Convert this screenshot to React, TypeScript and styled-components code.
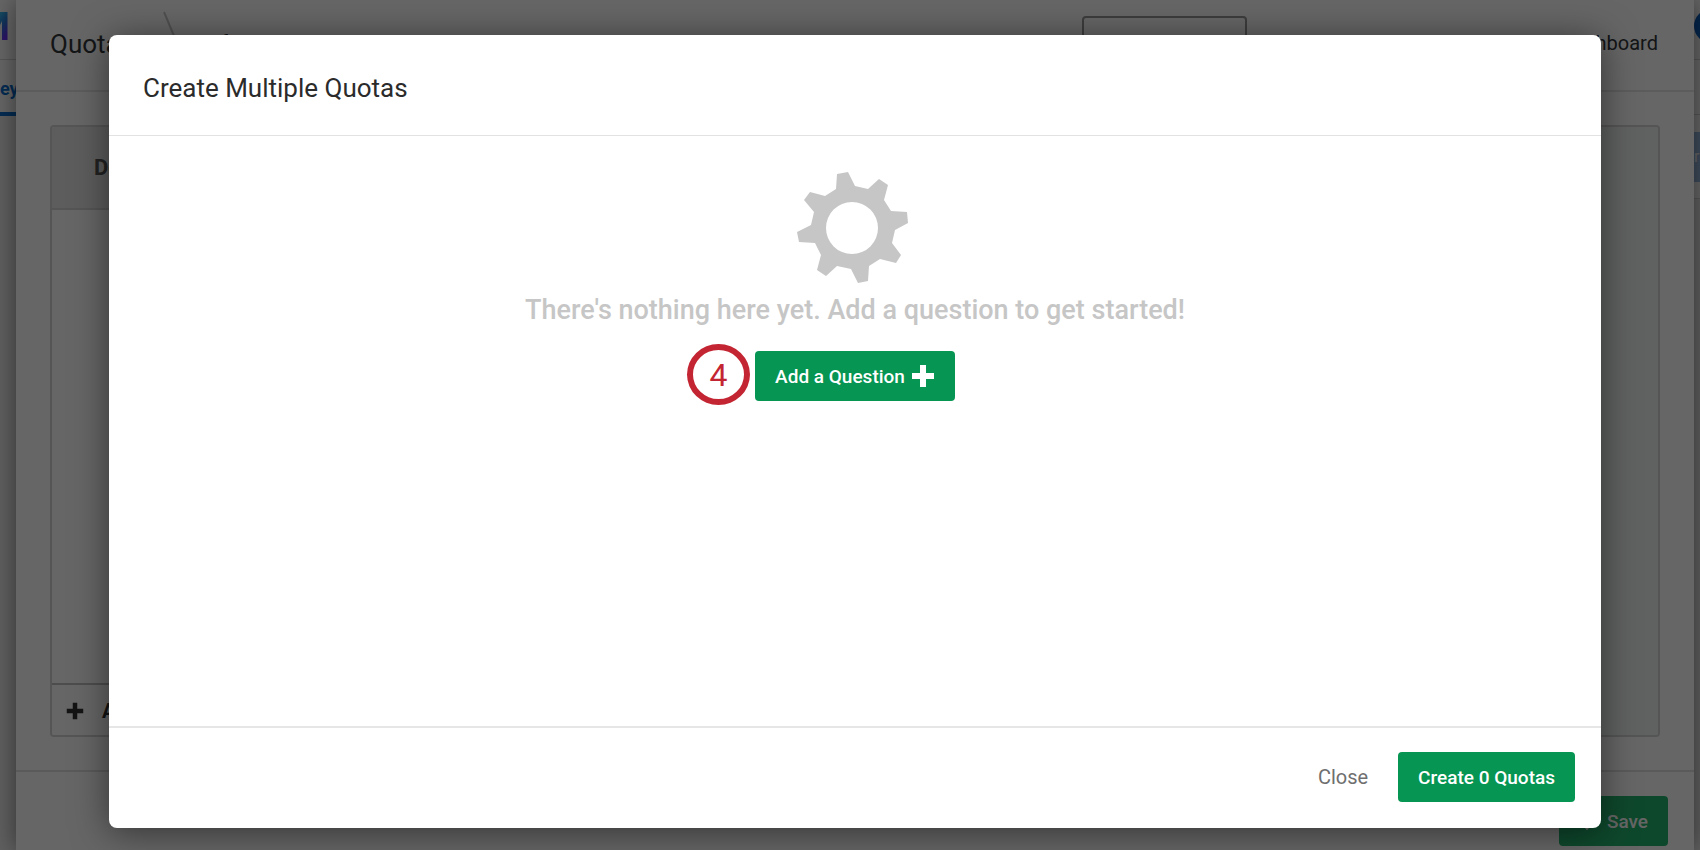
import React from "react";
import styled, { createGlobalStyle } from "styled-components";

const Global = createGlobalStyle`
  * { box-sizing: border-box; }
  html, body { margin: 0; height: 100%; }
  #root { height: 100%; }
  body { background: #fff; color: #32363a; font-family: Roboto, "Liberation Sans", sans-serif; overflow: hidden; }
  button { font: inherit; cursor: pointer; }
  h1, h2, p { margin: 0; font-weight: 400; }
`;

const Screen = styled.div`
  position: relative;
  display: grid;
  grid-template-columns: 16px minmax(0, 1fr) 6px;
  height: 100vh;
  overflow: hidden;
`;

const Edge = styled.aside`
  display: flex;
  flex-direction: column;
  overflow: hidden;
  background: #f0f0f0;
`;

const EdgeBar = styled.div`
  display: flex;
  flex: none;
  align-items: center;
  height: 60px;
  padding-bottom: 8px;
  background: #fff;
  border-bottom: 1px solid #d8d8d8;

  svg {
    display: block;
    flex: none;
  }
`;

const EdgeTab = styled.a`
  display: flex;
  flex: none;
  align-items: center;
  height: 56px;
  padding-top: 4px;
  background: #fff;
  border-bottom: 4px solid #0b6ed0;
  color: #0b6ed0;
  font-size: 18px;
  font-weight: 700;
  text-decoration: none;
`;

const EdgeRow = styled.div<{ $height: number }>`
  display: flex;
  flex: none;
  align-items: center;
  height: ${(p) => p.$height}px;
  background: #fff;
  border-bottom: 1px solid #d8d8d8;
`;

const EdgeBlock = styled.div`
  flex: 1;
  height: 50px;
  background: #9cbde6;
  color: #fff;
  font-size: 16px;
  line-height: 50px;
`;

const Panel = styled.main`
  z-index: 1;
  display: flex;
  flex-direction: column;
  min-width: 0;
  background: #fff;
  box-shadow: 0 0 24px rgba(0, 0, 0, 0.5);
`;

const PanelHeader = styled.header`
  display: flex;
  align-items: center;
  gap: 44px;
  flex: none;
  height: 92px;
  padding: 0 36px 4px 34px;
  border-bottom: 2px solid #e6e6e6;
  font-size: 20px;
  white-space: nowrap;
`;

const Crumbs = styled.div`
  display: flex;
  flex: 1;
  align-items: center;
  gap: 30px;
  font-size: 22px;
`;

const PanelTitle = styled.h1`
  padding-top: 2px;
  font-size: 26px;
`;

const CrumbGroup = styled.div`
  display: flex;
  align-items: center;
  gap: 8px;
`;

const OutlineButton = styled.button`
  height: 54px;
  padding: 0 25px;
  background: #fff;
  border: 2px solid #999;
  border-radius: 4px;
  color: inherit;
`;

const PlainButton = styled.button`
  padding: 0;
  background: none;
  border: 0;
  color: inherit;
`;

const PanelBody = styled.div`
  display: flex;
  flex: 1;
  min-height: 0;
  padding: 33px 34px;
`;

const QuotaBox = styled.section`
  display: flex;
  flex: 1;
  border: 2px solid #d4d4d4;
  border-radius: 4px;
  overflow: hidden;
`;

const GroupList = styled.div`
  display: flex;
  flex-direction: column;
  width: 400px;
`;

const GroupHead = styled.h2`
  height: 83px;
  padding-left: 42px;
  background: #e9e9e9;
  border-bottom: 2px solid #d4d4d4;
  color: #555;
  font-size: 22px;
  font-weight: 700;
  line-height: 82px;
`;

const AddGroup = styled.button`
  display: flex;
  align-items: center;
  gap: 18px;
  height: 52px;
  margin-top: auto;
  padding: 2px 14px 0;
  background: #fff;
  border: 0;
  border-top: 2px solid #c0c0c0;
  color: #333;
  font-size: 20px;
  font-weight: 700;
`;

const QuotaArea = styled.div`
  flex: 1;
  background: #f0f5f3;
`;

const PanelFooter = styled.footer`
  display: flex;
  align-items: center;
  justify-content: flex-end;
  flex: none;
  height: 80px;
  padding: 20px 26px 0;
  border-top: 2px solid #e0e0e0;
`;

const Backdrop = styled.div`
  position: absolute;
  inset: 0;
  z-index: 2;
  display: flex;
  padding: 35px 99px 22px 109px;
  background: rgba(0, 0, 0, 0.6);
`;

const Dialog = styled.div`
  display: flex;
  flex: 1;
  flex-direction: column;
  background: #fff;
  border-radius: 8px;
  box-shadow: 0 4px 36px rgba(0, 0, 0, 0.5);
`;

const DialogHeader = styled.header`
  display: flex;
  align-items: center;
  height: 101px;
  padding: 6px 34px 0;
  border-bottom: 1px solid #e2e2e2;
`;

const DialogTitle = styled.h2`
  color: #2b2b2b;
  font-size: 26px;
`;

const DialogBody = styled.div`
  display: flex;
  flex: 1;
  flex-direction: column;
  align-items: center;
  padding-top: 36px;
`;

const EmptyText = styled.p`
  margin-top: 10px;
  color: #c6c6c6;
  font-size: 27px;
  font-weight: 500;
  line-height: 32px;
`;

const ActionRow = styled.div`
  position: relative;
  margin-top: 25px;
`;

const StepBadge = styled.span`
  position: absolute;
  top: -7px;
  right: calc(100% + 5px);
  display: flex;
  align-items: center;
  justify-content: center;
  width: 63px;
  height: 61px;
  border: 6px solid #c42532;
  border-radius: 50%;
  color: #c42532;
  font-size: 32px;
`;

const PrimaryButton = styled.button<{ $faded?: boolean }>`
  display: flex;
  align-items: center;
  justify-content: center;
  gap: 6px;
  height: 50px;
  padding: 0 20px;
  background: ${(p) => (p.$faded ? "#24b46e" : "#069552")};
  border: 0;
  border-radius: 4px;
  color: #fff;
  font-size: 19px;
  font-weight: 500;
`;

const DialogFooter = styled.footer`
  display: flex;
  align-items: center;
  justify-content: flex-end;
  gap: 30px;
  height: 102px;
  padding: 0 26px 2px;
  border-top: 2px solid #e6e6e6;
  font-size: 20px;
`;

const CloseButton = styled(PlainButton)`
  color: #6f6f6f;
`;

const LogoMark = () => (
  <svg width="8" height="28" viewBox="0 0 8 28" aria-hidden="true">
    <defs>
      <linearGradient id="mark" x1="0" y1="0" x2="0.3" y2="1">
        <stop offset="0" stopColor="#36c0f0" />
        <stop offset="0.5" stopColor="#2a7fe0" />
        <stop offset="1" stopColor="#6a35ff" />
      </linearGradient>
    </defs>
    <path fill="url(#mark)" d="M0 0h7.5v28H2V9L0 13z" />
  </svg>
);

const Avatar = () => (
  <svg width="6" height="34" viewBox="0 0 6 34" aria-hidden="true">
    <circle cx="17" cy="17" r="17" fill="#0b62c4" />
  </svg>
);

const CrumbDivider = () => (
  <svg width="23" height="64" viewBox="0 0 23 64" aria-hidden="true">
    <path d="M1 1L14 32L1 63" fill="none" stroke="#c8c8c8" strokeWidth="2" />
  </svg>
);

const GearIcon = () => (
  <svg width="116" height="112" viewBox="0 0 116 112" aria-hidden="true">
    <path
      fill="#c6c6c6"
      fillRule="evenodd"
      d="M40 2L51 0L58 14L71 17L82 7L91 13L87 28L94 39L110 40L111 51L98 58L95 71L104 83L99 91L83 87L72 94L71 109L61 111L54 97L40 94L29 104L20 98L24 83L18 71L2 70L0 60L14 53L17 40L7 28L13 20L28 24L39 17ZM55 30A26 26 0 1 0 55 82A26 26 0 1 0 55 30Z"
    />
  </svg>
);

const PlusIcon = ({ size }: { size: number }) => (
  <svg width={size} height={size} viewBox="0 0 24 24" aria-hidden="true">
    <path fill="currentColor" d="M9 1h6v8h8v6h-8v8H9v-8H1V9h8z" />
  </svg>
);

const CheckIcon = () => (
  <svg width="22" height="20" viewBox="0 0 22 20" aria-hidden="true">
    <path d="M2 10l6 7L20 3" fill="none" stroke="currentColor" strokeWidth="3" />
  </svg>
);

export default function App() {
  return (
    <>
      <Global />
      <Screen>
        <Edge>
          <EdgeBar>
            <LogoMark />
          </EdgeBar>
          <EdgeTab href="#survey">ey</EdgeTab>
        </Edge>
        <Panel>
          <PanelHeader>
            <Crumbs>
              <PanelTitle>Quotas</PanelTitle>
              <CrumbGroup>
                <CrumbDivider />
                Default Quota Group
              </CrumbGroup>
            </Crumbs>
            <OutlineButton>Edit Multiple</OutlineButton>
            <PlainButton>Edit Options</PlainButton>
            <PlainButton>Public Quota Dashboard</PlainButton>
          </PanelHeader>
          <PanelBody>
            <QuotaBox>
              <GroupList>
                <GroupHead>Default Group</GroupHead>
                <AddGroup>
                  <PlusIcon size={18} />
                  Add Group
                </AddGroup>
              </GroupList>
              <QuotaArea />
            </QuotaBox>
          </PanelBody>
          <PanelFooter>
            <PrimaryButton $faded>
              <CheckIcon />
              Save
            </PrimaryButton>
          </PanelFooter>
        </Panel>
        <Edge>
          <EdgeBar>
            <Avatar />
          </EdgeBar>
          <EdgeRow $height={55} />
          <EdgeRow $height={84}>
            <EdgeBlock>r</EdgeBlock>
          </EdgeRow>
        </Edge>
        <Backdrop>
          <Dialog role="dialog" aria-modal="true" aria-labelledby="dialog-title">
            <DialogHeader>
              <DialogTitle id="dialog-title">Create Multiple Quotas</DialogTitle>
            </DialogHeader>
            <DialogBody>
              <GearIcon />
              <EmptyText>There's nothing here yet. Add a question to get started!</EmptyText>
              <ActionRow>
                <StepBadge>4</StepBadge>
                <PrimaryButton>
                  Add a Question
                  <PlusIcon size={24} />
                </PrimaryButton>
              </ActionRow>
            </DialogBody>
            <DialogFooter>
              <CloseButton>Close</CloseButton>
              <PrimaryButton>Create 0 Quotas</PrimaryButton>
            </DialogFooter>
          </Dialog>
        </Backdrop>
      </Screen>
    </>
  );
}
